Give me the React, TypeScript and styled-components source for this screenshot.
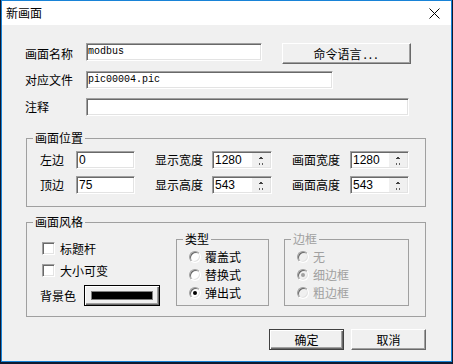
import styled, { createGlobalStyle, css } from 'styled-components'

const GlobalStyle = createGlobalStyle`
  html, body {
    margin: 0;
    padding: 0;
    background: #0e1a30;
  }
  body {
    font-family: 'Noto Sans CJK SC', 'Noto Sans', sans-serif;
    font-size: 12px;
    line-height: 14px;
    color: #000;
  }
`

const sunken = css`
  box-sizing: border-box;
  border: 1px solid;
  border-color: #a0a0a0 #fff #fff #a0a0a0;
  box-shadow: inset 1px 1px #696969, inset -1px -1px #e3e3e3;
  background: #fff;
`

const Window = styled.div`
  box-sizing: border-box;
  width: 451px;
  height: 362px;
  margin-left: 1px;
  border: 1px solid #1883d7;
  background: #f0f0f0;
  display: flex;
  flex-direction: column;
`

const TitleBar = styled.div`
  height: 24px;
  background: #fff;
  display: flex;
  align-items: center;
  justify-content: space-between;
  padding: 0 11px 0 4px;
`

const Body = styled.div`
  padding: 18px 25px 0 24px;
  display: flex;
  flex-direction: column;
`

const FormRow = styled.div<{ $h: number; $mb?: number }>`
  display: flex;
  align-items: flex-start;
  height: ${(p) => p.$h}px;
  margin-bottom: ${(p) => p.$mb ?? 0}px;
  margin-left: -1px;
`

const RowLabel = styled.div<{ $w: number }>`
  width: ${(p) => p.$w}px;
  flex-shrink: 0;
  white-space: nowrap;
  align-self: center;
`

const TextBox = styled.div<{ $w: number; $mono?: boolean }>`
  ${sunken};
  width: ${(p) => p.$w}px;
  height: 18px;
  padding-left: ${(p) => (p.$mono ? 1 : 2)}px;
  font-family: ${(p) =>
    p.$mono ? "'Liberation Mono', monospace" : "'Liberation Sans', sans-serif"};
  font-size: ${(p) => (p.$mono ? 10 : 12)}px;
  line-height: 16px;
  flex-shrink: 0;
`

const PushButton = styled.div<{ $w: number; $default?: boolean }>`
  box-sizing: border-box;
  width: ${(p) => p.$w}px;
  height: 21px;
  display: flex;
  align-items: center;
  justify-content: center;
  background: #f0f0f0;
  border: 1px solid;
  ${(p) =>
    p.$default
      ? css`
          border-color: #404040;
          box-shadow: inset 1px 1px #fff, inset -1px -1px #696969, inset -2px -2px #a0a0a0;
        `
      : css`
          border-color: #fff #696969 #696969 #fff;
          box-shadow: inset -1px -1px #a0a0a0;
        `}
`

const Dots = styled.span`
  letter-spacing: 2px;
  margin-left: 2px;
`

const Group = styled.fieldset<{ $w?: number; $mt?: number; $disabled?: boolean }>`
  margin: ${(p) => p.$mt ?? 0}px 0 0 0;
  padding: 0;
  border: 1px solid #a0a0a0;
  min-width: 0;
  width: ${(p) => (p.$w ? `${p.$w}px` : 'auto')};
  box-sizing: border-box;
  color: ${(p) => (p.$disabled ? '#a0a0a0' : '#000')};
`

const Legend = styled.legend`
  padding: 0 2px;
  margin-left: 6px;
  line-height: 14px;
`

const PosGrid = styled.div`
  padding: 6px 0 12px 13px;
  display: flex;
  flex-direction: column;
  gap: 7px;
`

const PosRow = styled.div`
  display: flex;
  gap: 20px;
`

const Cell = styled.div`
  display: flex;
  align-items: center;
`

const SpinBox = styled.div<{ $w: number }>`
  ${sunken};
  width: ${(p) => p.$w}px;
  height: 18px;
  display: flex;
  font-family: 'Liberation Sans', sans-serif;
  font-size: 12px;
  line-height: 16px;
`

const SpinText = styled.div`
  flex: 1;
  padding-left: 2px;
`

const SpinArrows = styled.div`
  width: 18px;
  background: #f0f0f0;
  margin: 1px 1px 1px 0;
  display: flex;
`

const StyleBody = styled.div`
  display: flex;
  padding: 3px 0 10px 0;
`

const LeftCol = styled.div`
  width: 149px;
  box-sizing: border-box;
  padding: 10px 0 0 15px;
  display: flex;
  flex-direction: column;
`

const CheckRow = styled.div`
  display: flex;
  align-items: center;
  gap: 5px;
  height: 13px;
  margin-bottom: 9px;
`

const CheckBox = styled.div`
  ${sunken};
  width: 13px;
  height: 13px;
`

const ColorRow = styled.div`
  display: flex;
  align-items: center;
  margin: -1px 0 0 -2px;
`

const ColorButton = styled.div`
  box-sizing: border-box;
  width: 76px;
  height: 21px;
  margin-left: 8px;
  border: 1px solid #000;
  background: #f0f0f0;
  box-shadow: inset 1px 1px #fff, inset -1px -1px #696969, inset -2px -2px #a0a0a0;
  display: flex;
  align-items: center;
  padding: 0 6px 0 6px;
`

const ColorBar = styled.div<{ $color: string }>`
  flex: 1;
  height: 7px;
  background: ${(p) => p.$color};
  border: 1px solid #808080;
`

const Radios = styled.div`
  padding: 2px 0 3px 12px;
  display: flex;
  flex-direction: column;
`

const RadioRow = styled.div`
  display: flex;
  align-items: center;
  gap: 4px;
  height: 18px;
`

const Radio = styled.div<{ $checked?: boolean; $disabled?: boolean }>`
  box-sizing: border-box;
  width: 12px;
  height: 12px;
  border-radius: 50%;
  border: 1px solid;
  border-color: #a0a0a0 #fff #fff #a0a0a0;
  box-shadow: inset 1px 1px #696969, inset -1px -1px #e3e3e3;
  background: ${(p) => (p.$disabled ? '#f0f0f0' : '#fff')};
  display: flex;
  align-items: center;
  justify-content: center;
  &::after {
    content: '';
    display: ${(p) => (p.$checked ? 'block' : 'none')};
    width: 4px;
    height: 4px;
    border-radius: 50%;
    background: ${(p) => (p.$disabled ? '#a0a0a0' : '#000')};
  }
`

const Footer = styled.div`
  display: flex;
  justify-content: flex-end;
  gap: 7px;
  margin-top: 12px;
`

const CloseIcon = () => (
  <svg width="11" height="11" viewBox="0 0 11 11">
    <path d="M0.5 0.5L10.5 10.5M10.5 0.5L0.5 10.5" stroke="#000" strokeWidth="1" />
  </svg>
)

const SpinGlyph = () => (
  <svg width="18" height="14" viewBox="0 0 18 14">
    <path d="M8 4h2v1h-2zM7 5h4v1h-4z" fill="#404040" />
    <path d="M7 10h1v1h-1zM10 10h1v1h-1zM7 11h1v1h-1zM10 11h1v1h-1z" fill="#606060" />
  </svg>
)

const Spin = ({ value, w }: { value: string; w: number }) => (
  <SpinBox $w={w}>
    <SpinText>{value}</SpinText>
    <SpinArrows>
      <SpinGlyph />
    </SpinArrows>
  </SpinBox>
)

const typeOptions = [
  { label: '覆盖式', checked: false },
  { label: '替换式', checked: false },
  { label: '弹出式', checked: true },
]

const borderOptions = [
  { label: '无', checked: false },
  { label: '细边框', checked: true },
  { label: '粗边框', checked: false },
]

export default function App() {
  return (
    <>
      <GlobalStyle />
      <Window>
        <TitleBar>
          <span>新画面</span>
          <CloseIcon />
        </TitleBar>
        <Body>
          <FormRow $h={21} $mb={7}>
            <RowLabel $w={61}>画面名称</RowLabel>
            <TextBox $w={176} $mono>modbus</TextBox>
            <PushButton $w={129} style={{ marginLeft: 20 }}>
              命令语言<Dots>...</Dots>
            </PushButton>
          </FormRow>
          <FormRow $h={18} $mb={9}>
            <RowLabel $w={61}>对应文件</RowLabel>
            <TextBox $w={247} $mono>pic00004.pic</TextBox>
          </FormRow>
          <FormRow $h={18}>
            <RowLabel $w={61}>注释</RowLabel>
            <TextBox $w={323} $mono />
          </FormRow>

          <Group $mt={15}>
            <Legend>画面位置</Legend>
            <PosGrid>
              <PosRow>
                <Cell>
                  <RowLabel $w={36}>左边</RowLabel>
                  <TextBox $w={59}>0</TextBox>
                </Cell>
                <Cell>
                  <RowLabel $w={57}>显示宽度</RowLabel>
                  <Spin w={60} value="1280" />
                </Cell>
                <Cell>
                  <RowLabel $w={58}>画面宽度</RowLabel>
                  <Spin w={59} value="1280" />
                </Cell>
              </PosRow>
              <PosRow>
                <Cell>
                  <RowLabel $w={36}>顶边</RowLabel>
                  <TextBox $w={59}>75</TextBox>
                </Cell>
                <Cell>
                  <RowLabel $w={57}>显示高度</RowLabel>
                  <Spin w={60} value="543" />
                </Cell>
                <Cell>
                  <RowLabel $w={58}>画面高度</RowLabel>
                  <Spin w={59} value="543" />
                </Cell>
              </PosRow>
            </PosGrid>
          </Group>

          <Group $mt={8}>
            <Legend>画面风格</Legend>
            <StyleBody>
              <LeftCol>
                <CheckRow>
                  <CheckBox />
                  <span>标题杆</span>
                </CheckRow>
                <CheckRow>
                  <CheckBox />
                  <span>大小可变</span>
                </CheckRow>
                <ColorRow>
                  <RowLabel $w={36}>背景色</RowLabel>
                  <ColorButton>
                    <ColorBar $color="#000" />
                  </ColorButton>
                </ColorRow>
              </LeftCol>
              <Group $w={93}>
                <Legend>类型</Legend>
                <Radios>
                  {typeOptions.map((o) => (
                    <RadioRow key={o.label}>
                      <Radio $checked={o.checked} />
                      <span>{o.label}</span>
                    </RadioRow>
                  ))}
                </Radios>
              </Group>
              <Group $w={125} $disabled style={{ marginLeft: 15 }}>
                <Legend>边框</Legend>
                <Radios>
                  {borderOptions.map((o) => (
                    <RadioRow key={o.label}>
                      <Radio $checked={o.checked} $disabled />
                      <span>{o.label}</span>
                    </RadioRow>
                  ))}
                </Radios>
              </Group>
            </StyleBody>
          </Group>

          <Footer>
            <PushButton $w={75} $default>确定</PushButton>
            <PushButton $w={75}>取消</PushButton>
          </Footer>
        </Body>
      </Window>
    </>
  )
}
